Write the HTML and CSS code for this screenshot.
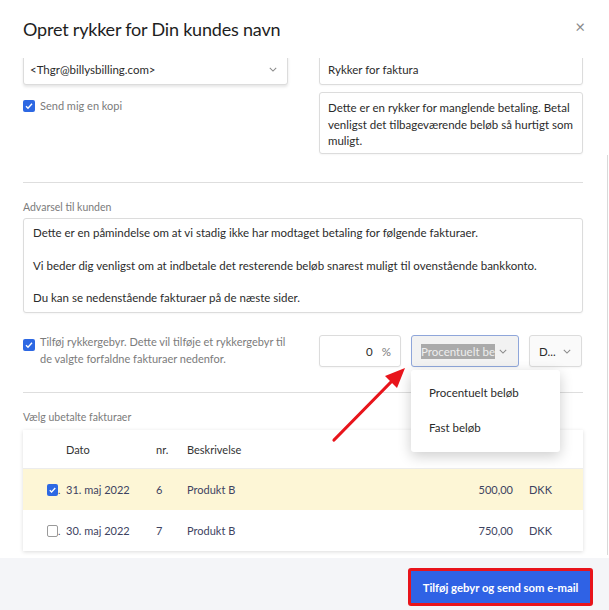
FILE: index.html
```html
<!DOCTYPE html>
<html lang="da">

<head>
    <meta charset="UTF-8">
    <meta name="viewport" content="width=device-width, initial-scale=1.0">
    <title>Opret rykker</title>
    <link rel="stylesheet" href="styles.css">
</head>

<body>
    <div class="modal">
        <header class="modal_head">
            <h1>Opret rykker for Din kundes navn</h1>
            <span class="close">&times;</span>
        </header>

        <div class="modal_body">
            <span class="scroll"></span>
            <div class="content">

                <div class="top_grid">
                    <div class="col">
                        <div class="field select email">
                            <span>&lt;Thgr@billysbilling.com&gt;</span>
                            <svg class="chev" viewBox="0 0 10 6"><path d="M1 1l4 4 4-4" /></svg>
                        </div>
                        <div class="check_row copy">
                            <span class="cb on"><svg viewBox="0 0 12 12"><path d="M3 6.2l2 2 4-4.4" /></svg></span>
                            <span>Send mig en kopi</span>
                        </div>
                    </div>
                    <div class="col">
                        <div class="field subject">Rykker for faktura</div>
                        <div class="field area">Dette er en rykker for manglende betaling. Betal venligst det tilbageværende beløb så hurtigt som muligt.</div>
                    </div>
                </div>

                <hr>

                <div class="label">Advarsel til kunden</div>
                <div class="field big_area">Dette er en påmindelse om at vi stadig ikke har modtaget betaling for følgende fakturaer.

Vi beder dig venligst om at indbetale det resterende beløb snarest muligt til ovenstående bankkonto.

Du kan se nedenstående fakturaer på de næste sider.</div>

                <div class="fee_row">
                    <div class="check_row fee_text">
                        <span class="cb on"><svg viewBox="0 0 12 12"><path d="M3 6.2l2 2 4-4.4" /></svg></span>
                        <span>Tilføj rykkergebyr. Dette vil tilføje et rykkergebyr til de valgte forfaldne fakturaer nedenfor.</span>
                    </div>
                    <div class="field pct"><span>0</span><span class="unit">%</span></div>
                    <div class="field select kind">
                        <span class="picked">Procentuelt be</span>
                        <svg class="chev" viewBox="0 0 10 6"><path d="M1 1l4 4 4-4" /></svg>
                        <ul class="menu">
                            <li>Procentuelt beløb</li>
                            <li>Fast beløb</li>
                        </ul>
                    </div>
                    <div class="field select currency">
                        <span>D...</span>
                        <svg class="chev" viewBox="0 0 10 6"><path d="M1 1l4 4 4-4" /></svg>
                    </div>
                </div>

                <hr>

                <div class="label">Vælg ubetalte fakturaer</div>
                <div class="invoices">
                    <div class="inv_row inv_head">
                        <span></span>
                        <span>Dato</span>
                        <span>nr.</span>
                        <span>Beskrivelse</span>
                        <span></span>
                        <span></span>
                    </div>
                    <div class="inv_row picked_row">
                        <span class="cb_cell"><span class="cb on small"><svg viewBox="0 0 12 12"><path d="M3 6.2l2 2 4-4.4" /></svg></span>.</span>
                        <span>31. maj 2022</span>
                        <span>6</span>
                        <span>Produkt B</span>
                        <span class="amount">500,00</span>
                        <span>DKK</span>
                    </div>
                    <div class="inv_row">
                        <span class="cb_cell"><span class="cb small"></span>.</span>
                        <span>30. maj 2022</span>
                        <span>7</span>
                        <span>Produkt B</span>
                        <span class="amount">750,00</span>
                        <span>DKK</span>
                    </div>
                </div>

            </div>
        </div>

        <footer class="modal_foot">
            <button class="btn">Tilføj gebyr og send som e-mail</button>
        </footer>
    </div>

    <!-- annotation arrow -->
    <svg class="arrow" width="609" height="610" viewBox="0 0 609 610">
        <path d="M334 440L393 380" />
        <polygon points="405,368 385,376 397,388" />
    </svg>
</body>

</html>
```

FILE: styles.css
```css
body {
    margin: 0;
    padding: 0;
    background-color: #fff;
    font-family: Lato, "Liberation Sans", sans-serif;
    color: #2b2b2b;
}

.modal {
    width: 609px;
    height: 610px;
    display: flex;
    flex-direction: column;
    overflow: hidden;
    position: relative;
}

.modal_head {
    height: 58px;
    flex: none;
    display: flex;
    align-items: center;
    justify-content: space-between;
    padding: 0 24px 0 23px;
    box-sizing: border-box;
    background-color: #fff;
    position: relative;
    z-index: 2;
}

.modal_head h1 {
    margin: 0;
    font-size: 18px;
    font-weight: 400;
    letter-spacing: -0.2px;
    color: #1e1e1e;
    padding-bottom: 1px;
}

.close {
    font-size: 17px;
    color: #8a8a8a;
    margin-bottom: 5px;
}

.modal_body {
    flex: 1;
    position: relative;
    overflow: hidden;
}

.scroll {
    position: absolute;
    right: 1px;
    top: 97px;
    width: 1px;
    height: 400px;
    background-color: #d9d9d9;
}

.content {
    padding: 0 26px 0 23px;
    margin-top: -4px;
}

.field {
    border: 1px solid #dcdcdc;
    border-radius: 3px;
    background-color: #fff;
    box-sizing: border-box;
    font-size: 11.5px;
    color: #2b2b2b;
    box-shadow: 0 1px 2px rgba(0, 0, 0, 0.04);
}

.select {
    display: flex;
    align-items: center;
    justify-content: space-between;
}

.chev {
    width: 8px;
    height: 5px;
    fill: none;
    stroke: #8a8a8a;
    stroke-width: 1.3;
}

.top_grid {
    display: grid;
    grid-template-columns: 265px 264px;
    column-gap: 31px;
}

.email {
    height: 31px;
    padding: 0 10px 0 6px;
    box-shadow: 0 2px 3px rgba(0, 0, 0, 0.1);
}

.subject {
    height: 31px;
    padding: 0 8px;
    display: flex;
    align-items: center;
}

.area {
    margin-top: 7px;
    height: 62px;
    padding: 7px 8px;
    line-height: 16.5px;
}

.check_row {
    display: flex;
    align-items: flex-start;
    gap: 5px;
    font-size: 11px;
    color: #7b7b7b;
}

.copy {
    margin-top: 15px;
    line-height: 12px;
}

.cb {
    width: 12px;
    height: 12px;
    flex: none;
    box-sizing: border-box;
    border-radius: 2px;
    border: 1px solid #9a9a9a;
    background-color: #fff;
    display: flex;
}

.cb.on {
    border: none;
    background-color: #2d68e3;
}

.cb svg {
    width: 12px;
    height: 12px;
    fill: none;
    stroke: #fff;
    stroke-width: 1.4;
}

hr {
    border: none;
    border-top: 1px solid #dedede;
    margin: 0;
}

.top_grid + hr {
    margin-top: 28px;
}

.label {
    font-size: 10.5px;
    color: #7b7b7b;
    margin-top: 18px;
    margin-bottom: 5px;
}

.big_area {
    height: 95px;
    padding: 6px 9px;
    line-height: 16.3px;
    white-space: pre-line;
}

.fee_row {
    display: grid;
    grid-template-columns: 287px 82px 109px 54px;
    column-gap: 9px;
    margin-top: 22px;
    height: 29px;
    margin-bottom: 28px;
}

.fee_text {
    line-height: 17px;
    margin-top: -2px;
    padding-right: 20px;
}

.fee_text .cb {
    margin-top: 6px;
}

.pct {
    display: flex;
    align-items: center;
    justify-content: flex-end;
    gap: 9px;
    padding-right: 9px;
}

.unit {
    color: #7b7b7b;
}

.kind {
    position: relative;
    padding: 0 11px 0 9px;
    border-color: #8fa6da;
    background-color: #f2f2f2;
    margin-left: 1px;
}

.picked {
    background-color: #aaaaaa;
    color: #eee;
    padding: 1px 0;
}

.currency {
    padding: 0 10px 0 9px;
    background-color: #fafafa;
    margin-left: 1px;
}

.menu {
    position: absolute;
    top: 34px;
    left: -1px;
    width: 149px;
    margin: 0;
    padding: 12px 0 0;
    list-style: none;
    background-color: #fff;
    border-radius: 3px;
    box-shadow: 0 4px 14px rgba(0, 0, 0, 0.2);
    z-index: 3;
}

.menu li {
    padding: 0 18px;
    height: 35px;
    line-height: 22px;
    font-size: 11.5px;
    color: #2b2b2b;
}

.invoices {
    margin-top: 7px;
    box-shadow: 0 1px 4px rgba(0, 0, 0, 0.14);
    background-color: #fff;
}

.inv_row {
    display: grid;
    grid-template-columns: 43px 90px 31px 1fr 86px 54px;
    align-items: center;
    height: 41px;
    font-size: 11px;
    color: #3e4361;
}

.inv_head {
    height: 38px;
    color: #333;
    border-bottom: 1px solid #ececec;
}

.picked_row {
    background-color: #fdf6d6;
}

.cb_cell {
    display: flex;
    align-items: flex-end;
    padding-left: 24px;
    font-size: 10px;
    color: #3e4361;
}

.cb.small {
    width: 11px;
    height: 12px;
}

.amount {
    text-align: right;
    padding-right: 16px;
}

.modal_foot {
    height: 52px;
    flex: none;
    background-color: #f4f5f8;
    display: flex;
    justify-content: flex-end;
    padding: 10px 16px 0 0;
    box-sizing: border-box;
}

.btn {
    height: 38px;
    width: 185px;
    border: 3px solid #e8141b;
    border-radius: 3px;
    background-color: #2f62e5;
    color: #fff;
    font-family: Lato, "Liberation Sans", sans-serif;
    font-size: 11.3px;
    font-weight: 700;
    cursor: pointer;
}

.arrow {
    position: absolute;
    top: 0;
    left: 0;
    pointer-events: none;
    z-index: 5;
}

.arrow path {
    stroke: #e8141b;
    stroke-width: 3.2;
    stroke-linecap: round;
}

.arrow polygon {
    fill: #e8141b;
}
```
